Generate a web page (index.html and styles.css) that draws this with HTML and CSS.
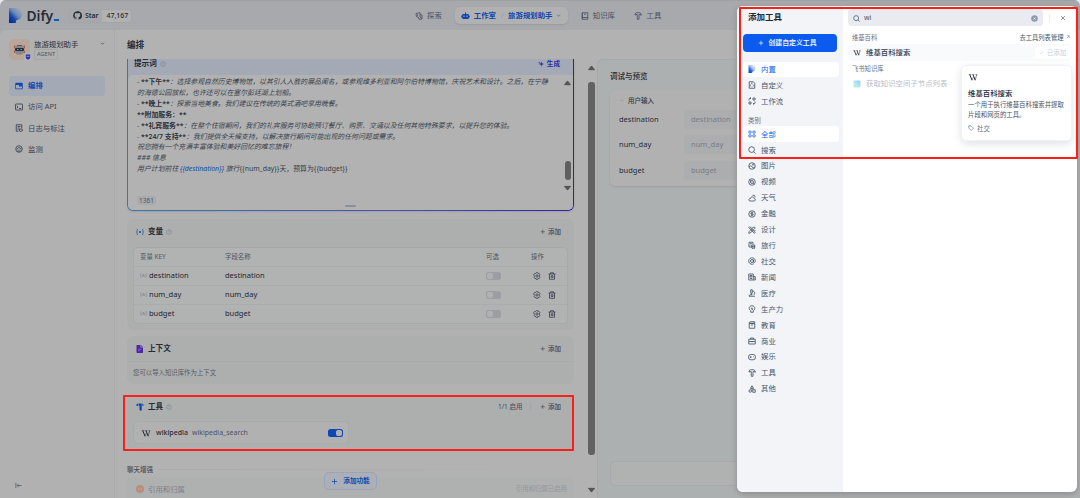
FILE: index.html
```html
<!DOCTYPE html>
<html lang="zh-CN">
<head>
<meta charset="utf-8">
<title>Dify</title>
<link rel="stylesheet" href="styles.css">
</head>
<body>
<svg class="sprite" xmlns="http://www.w3.org/2000/svg">
  <defs>
    <linearGradient id="lg-dark" x1=".1" x2=".9" y1="1" y2=".1"><stop offset="0" stop-color="#06289a"/><stop offset=".35" stop-color="#1a49a8"/><stop offset=".6" stop-color="#6d89b8"/><stop offset="1" stop-color="#a2a9b4"/></linearGradient>
    <linearGradient id="lg-light" x1=".1" x2=".9" y1="1" y2=".1"><stop offset="0" stop-color="#0f3fd0"/><stop offset=".35" stop-color="#2e66e0"/><stop offset=".6" stop-color="#9dbdf5"/><stop offset="1" stop-color="#eef4ff"/></linearGradient>
    <linearGradient id="lg-feishu" x1="1" x2="0" y1="0" y2="1"><stop offset="0" stop-color="#a9b9f8"/><stop offset=".5" stop-color="#a5e9f5"/><stop offset="1" stop-color="#c9f5c4"/></linearGradient>
  </defs>
  <symbol id="help" viewBox="0 0 16 16"><circle cx="8" cy="8" r="6.5"/><path d="M6 6.3c0-2.6 4-2.6 4 0 0 1.4-2 1.5-2 3M8 11v1"/></symbol>
  <symbol id="chev" viewBox="0 0 16 16"><path d="M3 5.5l5 5 5-5"/></symbol>
  <symbol id="plus" viewBox="0 0 16 16"><path d="M8 2v12M2 8h12"/></symbol>
  <symbol id="gear" viewBox="0 0 16 16"><path d="M6.5 1.3h3l.7 1.7 1.8-.4 1.7 2.3-.9 1.5.9 1.6-.9 1.6.8 1.5-1.7 2.3-1.7-.5-.7 1.8h-3l-.7-1.8-1.7.5-1.7-2.3.8-1.5L1.5 8l1-1.6-.9-1.5L3.400 2.600l1.700.4z"/><circle cx="8" cy="8" r="2.3"/></symbol>
  <symbol id="trash" viewBox="0 0 16 16"><path d="M1 4h14M5 4V1.500h6V4M3 4v10.500h10V4M6.500 7.500h3.500v3.500H6.500z"/></symbol>
  <symbol id="file" viewBox="0 0 16 16"><path d="M2.500 1.500h8l3 3v10h-11zM5.500 7L4.500 9l1.500 2M10 7l1.500 2L10 11M6 4.500h3"/></symbol>
  <symbol id="flow" viewBox="0 0 16 16"><path d="M2 7V4.500C2 3 3 2.500 4 2.500h2M10 2h4v4h-4zM2 10h4v4H2zM14 9v2.500c0 1.500-1 2-2 2h-2M5 1v3M11 12v3"/></symbol>
  <symbol id="grid" viewBox="0 0 16 16"><rect x="1.500" y="2" width="5" height="4.500" rx="2"/><rect x="9.500" y="2" width="5" height="4.500" rx="2"/><rect x="1.500" y="9.500" width="5" height="4.500" rx="2"/><rect x="9.500" y="9.500" width="5" height="4.500" rx="2"/></symbol>
  <symbol id="search" viewBox="0 0 16 16"><circle cx="7.200" cy="7.200" r="5.700"/><path d="M11.500 11.500l3.500 3.500"/></symbol>
  <symbol id="image" viewBox="0 0 16 16"><circle cx="8" cy="8" r="6.500"/><path d="M2 9.500c3-3 5-2 6 0s3 3 5.500 1"/><circle cx="10" cy="5.500" r="1"/></symbol>
  <symbol id="video" viewBox="0 0 16 16"><circle cx="8" cy="8" r="6.500"/><circle cx="8" cy="8" r="3"/><path d="M7.500 8h1M3.500 3.500l2 2M10.500 10.500l2 2"/></symbol>
  <symbol id="weather" viewBox="0 0 16 16"><path d="M4 14h8c3.500 0 3.500-5 .2-5C11 4.500 5 5 5 9c-4-.5-4 5-1 5M9 4c1-2.500 5-2 5 1v2"/></symbol>
  <symbol id="finance" viewBox="0 0 16 16"><circle cx="8" cy="8" r="6.500"/><path d="M10.500 5.500h-4c-1.500 0-1.500 2.500 0 2.500h3c1.500 0 1.500 2.500 0 2.500h-4M8 3.500v9"/></symbol>
  <symbol id="design" viewBox="0 0 16 16"><path d="M3 1.500L1.500 3l11 11.500L14.500 13zM12 1.500l2.500 2.500L4.500 14l-3 .5.500-3zM7 1.500l1.500 2M13 8l1.500 2"/></symbol>
  <symbol id="travel" viewBox="0 0 16 16"><path d="M2 12V2.500h8V7M2 12h5M4.500 5h3M4.500 8h2M7.500 8h6v6h-6zM9 14v1.500M12.500 14v1.500M7.500 11h6"/></symbol>
  <symbol id="social" viewBox="0 0 16 16"><circle cx="8" cy="8" r="3"/><path d="M11 5v4.500c0 2.500 3.500 2 3.500-1.500a6.500 6.500 0 1 0-3 5.500"/></symbol>
  <symbol id="news" viewBox="0 0 16 16"><path d="M1.500 2h9v12h-9zM10.500 7h4v7h-4M4 5h4v3H4zM4 11h4M12.500 9.500v2"/></symbol>
  <symbol id="medical" viewBox="0 0 16 16"><path d="M2 14.500h12M4 11.500h5M5.500 1.500h3v7h-3zM9 4c5 0 5.500 6 2.500 8M2.500 11.500v3M7 9v2.500"/></symbol>
  <symbol id="bulb" viewBox="0 0 16 16"><path d="M5.500 11.500C0 8 2.500 1.500 8 1.500S16 8 10.500 11.500v3h-5zM8 5L6.500 7.500h3L8 10"/></symbol>
  <symbol id="book" viewBox="0 0 16 16"><path d="M2.500 5V3.500c0-1.500 1-2 2-2h9v3h-10M2.500 5h11v9.500h-11zM5.500 8h5"/></symbol>
  <symbol id="case" viewBox="0 0 16 16"><path d="M1.500 4.500h13v9.500h-13zM5 4.500V2h6v2.500M1.500 9h13M8 8v2.500"/></symbol>
  <symbol id="game" viewBox="0 0 16 16"><rect x="1" y="3" width="14" height="10.500" rx="4.500"/><path d="M3.500 8.200h3.500M5.300 6.500v3.500M10 7h1M11.500 9.500h1"/></symbol>
  <symbol id="hammer" viewBox="0 0 16 16"><path d="M2 6V3.500L5 1.500h6.500L14.500 4v2.500l-3-1.500H10v9.500H6.500V5z"/></symbol>
  <symbol id="other" viewBox="0 0 16 16"><path d="M8 1.500L11 6.500H5z"/><circle cx="4.500" cy="12" r="2.500"/><path d="M9.500 9.500h5v5h-5zM5 8h6"/></symbol>
  <symbol id="tag" viewBox="0 0 16 16"><path d="M2 2h6l6.500 6.500-6 6L2 8zM5 5h.5"/></symbol>
  <symbol id="var" viewBox="0 0 16 16"><path d="M2 3v10M14 3v10M5.500 11L8 5l2.500 6M6.500 9h3"/></symbol>
  <symbol id="up" viewBox="0 0 8 6"><path d="M3.300.6Q4 0 4.700.6L7.800 4.600Q8 5.600 7.200 5.600H.8Q0 5.600.2 4.600z"/></symbol>
  <symbol id="wiki" viewBox="0 0 22 16"><path d="M1 1.500h6M9 1.500h5M16.500 1.500H21" stroke-width="1.200"/><path d="M3.500 1.500L8.800 14M11 1.500L16 14" stroke-width="2.200"/><path d="M8.500 14.500L12 7M15.700 14.500L19.500 1.500" stroke-width="1.200"/></symbol>
</svg>

<div class="app">
  <header class="topbar">
    <div class="brand">
      <svg class="logo" viewBox="0 0 13 15"><path d="M0 0h7a6 6 0 0 1 6 6c0 3.500-1.500 5.500-5 6-1 .2-1.200 1-1.200 3H0z" fill="url(#lg-dark)"/></svg>
      <span class="word">Dify<i></i></span>
    </div>
    <div class="star"><span class="gh"><svg viewBox="0 0 16 16"><path fill="currentColor" d="M8 .5a7.500 7.500 0 0 0-2.500 14.600c.4.100.5-.1.5-.4v-1.500c-2 .4-2.600-.8-2.800-1.300-.3-.6-.6-.9-1-1.200.8-.2 1.500.3 1.900 1 .6.9 1.400.8 2 .5 0-.5.200-.9.500-1.100-2-.3-3.600-1-3.600-3.700 0-.8.300-1.500.8-2-.1-.4-.3-1.100.1-2 0 0 .7-.2 2.100.8a7 7 0 0 1 4 0c1.400-1 2.100-.8 2.100-.8.4.9.200 1.600.1 2 .5.500.8 1.200.8 2 0 2.700-1.700 3.400-3.600 3.700.3.300.6.800.6 1.500v2.200c0 .2.100.5.500.4A7.500 7.500 0 0 0 8 .5z"/></svg>Star</span><span class="count">47,167</span></div>
    <nav class="topnav">
      <span class="tab"><svg class="ic" viewBox="0 0 16 16"><path d="M2 3l8-1.500v3L14 6v8l-6 .5-1-4-4-1zM10 4.500V10l4 3M5 5v3"/></svg>探索</span>
      <span class="tab on"><svg class="bot" viewBox="0 0 18 16"><path fill="currentColor" fill-rule="evenodd" d="M8 1h2v3h4c1 0 1.500.8 1.500 2v1h2v4h-2v1c0 1.500-.8 2-2 2h-9c-1.200 0-2-.8-2-2v-1h-2V7h2V6c0-1.200.5-2 2-2H8zM5 7v3h2V7zm6 0v3h2V7z"/></svg>工作室<em>/</em>旅游规划助手<svg class="ic sm" viewBox="0 0 16 16"><use href="#chev"/></svg></span>
      <span class="tab know"><svg class="ic" viewBox="0 0 16 16"><path d="M2.500 1.500h11v13h-11zM2.500 11h11M6 4.500h4M2.500 1.500v13"/></svg>知识库</span>
      <span class="tab tools"><svg class="ic" viewBox="0 0 16 16"><use href="#hammer"/></svg>工具</span>
    </nav>
  </header>

  <div class="body">
    <aside class="side">
      <div class="appinfo">
        <div class="avatar">
          <svg viewBox="0 0 21 21"><path d="M5.800 6.500v3M15.200 6.500v3M5.800 11.500v2.500M15.200 11.500v2.500" stroke="#a04a48" stroke-width="1.200"/><rect x="6.800" y="6" width="7.500" height="9.500" rx="2.500" fill="#84878d"/><rect x="6" y="9" width="9" height="3" rx="1" fill="#26313f"/><path d="M8 10.500h1.500M11.500 10.500H13" stroke="#4fa6b5"/><path d="M8 6.500h5" stroke="#7b4a4d"/></svg>
          <span class="badge"><svg viewBox="0 0 8 8"><path d="M1.800 1.500h4.400v3q0 1.500-2.200 2.200Q1.800 6 1.800 4.500z" fill="#2a34a8"/><path d="M2.500 3.300h3" stroke="#8d93c8"/></svg></span>
        </div>
        <div class="appname"><b>旅游规划助手</b><small>AGENT</small></div>
        <svg class="ic sm" viewBox="0 0 16 16"><use href="#chev"/></svg>
      </div>
      <nav class="sidenav">
        <span class="on"><svg viewBox="0 0 16 16"><path fill="currentColor" fill-rule="evenodd" d="M2 1.500h12c1 0 1.500.5 1.500 1.500v10c0 1-.5 1.500-1.500 1.500H2C1 14.500.5 14 .5 13V3c0-1 .5-1.500 1.500-1.500zM2 6v7h12V9H8V6z"/></svg>编排</span>
        <span><svg class="ic" viewBox="0 0 16 16"><rect x="1" y="2" width="14" height="12" rx="1"/><path d="M3.500 5.500L6 8l-2.500 2.500M8 11h4.500"/></svg>访问 API</span>
        <span><svg class="ic" viewBox="0 0 16 16"><path d="M13.500 8V1.500h-11v13H7M5 5h6M5 8h4M5 11h2M9 10h5.500v4H13l-1.500 1.500L10 14H9z"/></svg>日志与标注</span>
        <span><svg class="ic" viewBox="0 0 16 16"><circle cx="8" cy="8" r="6.500"/><path d="M4 9c0-5 8-5 8 0M8 9l2-2M5 12h6"/></svg>监测</span>
      </nav>
      <svg class="ic collapse" viewBox="0 0 16 16"><path d="M2 2v12M15 8H5M8.500 4L5 8l3.500 4"/></svg>
    </aside>

    <main class="config">
      <h1>编排</h1>
      <div class="scroller">
        <div class="cards">
          <section class="prompt">
            <div class="prompt-in">
              <div class="prompt-head"><b>提示词</b><svg class="ic help" viewBox="0 0 16 16"><use href="#help"/></svg><span class="gen"><svg viewBox="0 0 16 16"><path fill="currentColor" d="M9 1l1.700 5.300L16 8l-5.300 1.700L9 15 7.300 9.700 2 8l5.300-1.700zM3 1l.7 2.300L6 4l-2.300.7L3 7l-.7-2.300L0 4l2.300-.7z"/></svg>生成</span></div>
              <div class="prompt-body">
                <div class="text">
                  <p>- <b>**下午**</b>：选择参观自然历史博物馆，以其引人入胜的展品闻名，或参观维多利亚和阿尔伯特博物馆，庆祝艺术和设计。之后，在宁静</p>
                  <p>的海德公园放松，也许还可以在塞尔彭廷湖上划船。</p>
                  <p>- <b>**晚上**</b>：探索当地美食。我们建议在传统的英式酒吧享用晚餐。</p>
                  <p><b>**附加服务：**</b></p>
                  <p>- <b>**礼宾服务**</b>：在整个住宿期间，我们的礼宾服务可协助预订餐厅、购票、交通以及任何其他特殊要求，以提升您的体验。</p>
                  <p>- <b>**24/7 支持**</b>：我们提供全天候支持，以解决旅行期间可能出现的任何问题或需求。</p>
                  <p>祝您拥有一个充满丰富体验和美好回忆的难忘旅程！</p>
                  <p>### 信息</p>
                  <p class="last">用户计划前往 <a>{{destination}}</a> 旅行<span>{{num_day}}天，预算为{{budget}}</span></p>
                </div>
                <div class="bar"><svg viewBox="0 0 8 6"><use href="#up"/></svg><i></i><svg class="down" viewBox="0 0 8 6"><use href="#up"/></svg></div>
              </div>
              <div class="prompt-foot"><span>1361</span><i></i></div>
            </div>
          </section>

          <section class="card vars">
            <div class="card-head"><svg class="ic blue" viewBox="0 0 16 16"><path d="M4 2C1 3 3 7 1 8c2 1 0 5 3 6M12 2c3 1 1 5 3 6-2 1 0 5-3 6M6 6l4 4M10 6l-4 4"/></svg><b>变量</b><svg class="ic help" viewBox="0 0 16 16"><use href="#help"/></svg><span class="add"><svg class="ic" viewBox="0 0 16 16"><use href="#plus"/></svg>添加</span></div>
            <div class="table">
              <div class="tr th"><span>变量 KEY</span><span>字段名称</span><span>可选</span><span>操作</span></div>
              <div class="tr"><span><svg class="ic v" viewBox="0 0 16 16"><use href="#var"/></svg>destination</span><span>destination</span><span><i class="sw"></i></span><span class="ops"><svg class="ic" viewBox="0 0 16 16"><use href="#gear"/></svg><svg class="ic" viewBox="0 0 16 16"><use href="#trash"/></svg></span></div>
              <div class="tr"><span><svg class="ic v" viewBox="0 0 16 16"><use href="#var"/></svg>num_day</span><span>num_day</span><span><i class="sw"></i></span><span class="ops"><svg class="ic" viewBox="0 0 16 16"><use href="#gear"/></svg><svg class="ic" viewBox="0 0 16 16"><use href="#trash"/></svg></span></div>
              <div class="tr"><span><svg class="ic v" viewBox="0 0 16 16"><use href="#var"/></svg>budget</span><span>budget</span><span><i class="sw"></i></span><span class="ops"><svg class="ic" viewBox="0 0 16 16"><use href="#gear"/></svg><svg class="ic" viewBox="0 0 16 16"><use href="#trash"/></svg></span></div>
            </div>
          </section>

          <section class="card context">
            <div class="card-head"><svg viewBox="0 0 16 16"><path fill="#4a26a8" d="M3 0h6v5h5v9c0 1.200-.8 2-2 2H3c-1.200 0-2-.8-2-2V2C1 .8 1.800 0 3 0zM10.500 0L14 3.500h-3.500z"/><path d="M4 8.500h7M4 11.500h4" stroke="#a79cc4"/></svg><b>上下文</b><span class="add"><svg class="ic" viewBox="0 0 16 16"><use href="#plus"/></svg>添加</span></div>
            <p>您可以导入知识库作为上下文</p>
          </section>

          <section class="card toolcard">
            <div class="card-head"><svg viewBox="0 0 16 16"><path fill="#0d48b4" d="M1 2.500L4 1v4.500L1 6zM5 1h6.500v14H7V5.500H5zM12.500 1.500l2.500 1v3l-2.500-.5z"/></svg><b>工具</b><svg class="ic help" viewBox="0 0 16 16"><use href="#help"/></svg><span class="enabled">1/1 启用</span><span class="add"><svg class="ic" viewBox="0 0 16 16"><use href="#plus"/></svg>添加</span></div>
            <div class="toolrow"><svg class="ic w" viewBox="0 0 22 16"><use href="#wiki"/></svg><b>wikipedia</b><span class="fn">wikipedia_search</span><i class="sw on"></i></div>
          </section>

          <div class="chat">聊天增强<i></i></div>
          <section class="cite"><svg viewBox="0 0 16 16"><circle cx="8" cy="8" r="8" fill="#b98d79"/><path d="M4 6h3v4H4zM9 6h3v4H9z" fill="#b3a39b"/></svg><span>引用和归属</span><em>引用和归属已启用</em></section>
        </div>
        <div class="bar main"><svg viewBox="0 0 8 6"><use href="#up"/></svg><i></i><svg class="down" viewBox="0 0 8 6"><use href="#up"/></svg></div>
      </div>
      <div class="feature"><svg class="ic" viewBox="0 0 16 16"><use href="#plus"/></svg>添加功能</div>
    </main>

    <section class="preview">
      <h2>调试与预览</h2>
      <div class="inputs">
        <div class="in-head"><svg class="ic sm" viewBox="0 0 16 16"><use href="#chev"/></svg>用户输入</div>
        <div class="field"><span>destination</span><i>destination</i></div>
        <div class="field"><span>num_day</span><i>num_day</i></div>
        <div class="field"><span>budget</span><i>budget</i></div>
      </div>
      <div class="chatbox"></div>
    </section>
  </div>

  <div class="modal">
    <aside class="mside">
      <h3>添加工具</h3>
      <button><svg class="ic" viewBox="0 0 16 16"><use href="#plus"/></svg>创建自定义工具</button>
      <nav>
        <span class="on"><svg viewBox="0 0 13 15"><path d="M0 0h7a6 6 0 0 1 6 6c0 3.500-1.500 5.500-5 6-1 .2-1.200 1-1.200 3H0z" fill="url(#lg-light)"/></svg>内置</span>
        <span><svg class="ic" viewBox="0 0 16 16"><use href="#file"/></svg>自定义</span>
        <span><svg class="ic" viewBox="0 0 16 16"><use href="#flow"/></svg>工作流</span>
      </nav>
      <h4>类别</h4>
      <nav>
        <span class="on"><svg class="ic" viewBox="0 0 16 16"><use href="#grid"/></svg>全部</span>
        <span><svg class="ic" viewBox="0 0 16 16"><use href="#search"/></svg>搜索</span>
        <span><svg class="ic" viewBox="0 0 16 16"><use href="#image"/></svg>图片</span>
        <span><svg class="ic" viewBox="0 0 16 16"><use href="#video"/></svg>视频</span>
        <span><svg class="ic" viewBox="0 0 16 16"><use href="#weather"/></svg>天气</span>
        <span><svg class="ic" viewBox="0 0 16 16"><use href="#finance"/></svg>金融</span>
        <span><svg class="ic" viewBox="0 0 16 16"><use href="#design"/></svg>设计</span>
        <span><svg class="ic" viewBox="0 0 16 16"><use href="#travel"/></svg>旅行</span>
        <span><svg class="ic" viewBox="0 0 16 16"><use href="#social"/></svg>社交</span>
        <span><svg class="ic" viewBox="0 0 16 16"><use href="#news"/></svg>新闻</span>
        <span><svg class="ic" viewBox="0 0 16 16"><use href="#medical"/></svg>医疗</span>
        <span><svg class="ic" viewBox="0 0 16 16"><use href="#bulb"/></svg>生产力</span>
        <span><svg class="ic" viewBox="0 0 16 16"><use href="#book"/></svg>教育</span>
        <span><svg class="ic" viewBox="0 0 16 16"><use href="#case"/></svg>商业</span>
        <span><svg class="ic" viewBox="0 0 16 16"><use href="#game"/></svg>娱乐</span>
        <span><svg class="ic" viewBox="0 0 16 16"><use href="#hammer"/></svg>工具</span>
        <span><svg class="ic" viewBox="0 0 16 16"><use href="#other"/></svg>其他</span>
      </nav>
    </aside>
    <div class="mmain">
      <div class="searchrow">
        <div class="searchbox"><svg class="ic" viewBox="0 0 16 16"><use href="#search"/></svg>wi<svg class="clear" viewBox="0 0 16 16"><circle cx="8" cy="8" r="7.500" fill="#8d99ae"/><path d="M5.500 5.500l5 5M10.500 5.500l-5 5" stroke="#fff" stroke-width="1.500"/></svg></div>
        <i></i><svg class="ic close" viewBox="0 0 16 16"><path d="M3 3l10 10M13 3L3 13"/></svg>
      </div>
      <div class="group"><span>维基百科</span><span class="manage">去工具列表管理<svg class="ic" viewBox="0 0 16 16"><path d="M3 13L13 3M5 3h8v8"/></svg></span></div>
      <div class="result"><svg class="ic w" viewBox="0 0 22 16"><use href="#wiki"/></svg><b>维基百科搜索</b><span class="added"><svg class="ic" viewBox="0 0 16 16"><path d="M2 8.500l4 4 8-9"/></svg>已添加</span></div>
      <div class="group two"><span>飞书知识库</span></div>
      <div class="result off"><svg viewBox="0 0 16 16"><path d="M1 1h12l2 2v10l-3 2H1z" fill="url(#lg-feishu)"/></svg>获取知识空间子节点列表</div>
      <div class="tip">
        <svg class="ic w" viewBox="0 0 22 16"><use href="#wiki"/></svg>
        <b>维基百科搜索</b>
        <p>一个用于执行维基百科搜索并提取<br>片段和网页的工具。</p>
        <small><svg class="ic" viewBox="0 0 16 16"><use href="#tag"/></svg>社交</small>
      </div>
    </div>
  </div>

  <div class="mark mark-modal"></div>
  <div class="mark mark-tools"></div>
</div>
</body>
</html>
```
FILE: styles.css
```css
* { box-sizing: border-box; }
body { margin: 0; background: #e8e8e8; }
body, button { font-family: "Noto Sans", "Noto Sans CJK SC", sans-serif; font-size: 7.4px; line-height: 1.2; color: #262c36; }
h1, h2, h3, h4, p { margin: 0; font-weight: 400; }
b { font-weight: 600; }
i, em { font-style: normal; }
svg { display: block; flex: none; width: 8px; height: 8px; }
.sprite { position: absolute; width: 0; height: 0; }
.ic { fill: none; stroke: currentColor; stroke-width: 1.7; }
.sm { width: 5px; height: 5px; }
.app { position: relative; width: 1080px; height: 498px; overflow: hidden; border-radius: 6px 6px 0 0; background: #a8a9ac; display: flex; flex-direction: column; white-space: nowrap; }

/* top bar */
.topbar { height: 30px; flex: none; display: flex; align-items: center; padding-left: 9px; border-top: 1px solid #a0a1a3; }
.brand { display: flex; align-items: center; width: 59px; }
.logo { width: 13px; height: 15px; }
.word { margin-left: 4.5px; font-size: 13.8px; font-weight: 600; line-height: 16px; color: #252d3b; }
.word i { display: inline-block; width: 5px; height: 2px; background: #0e5cc5; margin-left: 1px; }
.star { display: flex; height: 14px; border-radius: 4px; overflow: hidden; border: 1px solid #a4a5a8; width: 64px; font-size: 6.900px; font-weight: 600; line-height: 12px; }
.gh { display: flex; align-items: center; gap: 3px; width: 33px; padding-left: 4px; background: #a6a8ab; }
.gh svg { width: 9px; height: 9px; }
.count { flex: 1; background: #b2b2b2; padding-left: 4.500px; font-weight: 500; }
.topnav { display: flex; align-items: center; height: 100%; margin-left: 283px; color: #4a515e; font-size: 7.4px; }
.tab { display: flex; align-items: center; gap: 4px; }
.tab.on { width: 113px; height: 17px; margin-left: 13px; padding-left: 6px; border-radius: 5px; background: #b1b1b2; color: #0e47ae; font-weight: 600; box-shadow: 0 1px 2px #9a9b9e; }
.tab.on em { color: #8d9bb5; font-weight: 400; margin: 0 .7px; }
.bot { width: 9px; height: 8px; }
.know { margin-left: 13px; }
.know + .tools { margin-left: 19.500px; }

/* page body */
.body { flex: 1; display: flex; min-height: 0; background: #b2b2b2; border-radius: 6px 0 0 0; overflow: hidden; }
.side { width: 115px; border-right: 1px solid #a8a9ab; padding: 9px 9px 9px; display: flex; flex-direction: column; background: #b1b1b2; }
.appinfo { display: flex; height: 21px; align-items: flex-start; }
.avatar { position: relative; width: 21px; height: 21px; border-radius: 5px; background: #b8a698; }
.avatar > svg { width: 21px; height: 21px; }
.badge { position: absolute; left: 15px; top: 14px; width: 8px; height: 8px; border-radius: 2px; background: #b4b4b4; }
.badge svg { width: 8px; height: 8px; }
.appname { width: 58px; margin-left: 4px; display: flex; flex-direction: column; align-items: flex-start; }
.appname b { font-size: 7.4px; line-height: 10px; font-weight: 400; }
.appname small { font-size: 5.600px; line-height: 9px; border: 1px solid #a5a6a8; border-radius: 2px; padding: 0 2px; color: #4d5460; }
.appinfo .sm { margin: 2px 0 0 8px; }
.sidenav { margin-top: 16px; display: flex; flex-direction: column; gap: 1.5px; color: #3a414d; font-size: 7.4px; }
.sidenav span { height: 19.6px; display: flex; align-items: center; gap: 5px; padding-left: 6px; border-radius: 4px; }
.sidenav .on { background: #a3a9b5; color: #1148ae; font-weight: 600; }
.collapse { width: 7px; height: 7px; margin: auto 0 0 6px; color: #505763; }

/* configuration column */
.config { position: relative; width: 482px; display: flex; flex-direction: column; padding-left: 12px; }
.config h1 { font-size: 8.6px; font-weight: 700; line-height: 30px; height: 29px; }
.scroller { flex: 1; min-height: 0; display: flex; overflow: hidden; }
.cards { width: 447px; }
.bar { display: flex; flex-direction: column; align-items: center; width: 7px; fill: #565656; }
.bar svg { width: 7px; height: 6px; }
.bar i { width: 6px; flex: none; background: #5f5f5f; border-radius: 3px; }
.bar .down { transform: rotate(180deg); }
.bar.main { margin-left: 13.900px; height: 433px; padding-top: 6px; }
.bar.main i { width: 6.600px; height: 373px; margin: 11px 0 32px; background: #626262; }
.prompt { height: 152px; padding: 0 1px 1.5px; border-radius: 0 0 6px 6px; background: linear-gradient(90deg, #3679a8, #4a52b8 60%, #2d23a0); box-shadow: 0 1px 2px #a0a0a3; }
.prompt-in { height: 100%; border-radius: 0 0 5px 5px; background: #a3a9b5; overflow: hidden; display: flex; flex-direction: column; }
.prompt-head { height: 16px; display: flex; align-items: center; padding: 0 13px 6px 6px; font-size: 7.6px; flex: none; }
.help { width: 6px; height: 6px; margin-left: 3px; color: #858b96; }
.gen { margin-left: auto; display: flex; gap: 3px; align-items: center; color: #3030a8; font-size: 6.6px; font-weight: 600; }
.gen svg { width: 6px; height: 6px; }
.prompt-body { height: 120px; display: flex; background: #b2b2b2; border-radius: 5px 0 0 0; }
.text { width: 436px; flex: none; padding: 2.400px 0 0 9px; font-size: 6.88px; font-style: italic; color: #363e4a; }
.text p { height: 10.85px; line-height: 10.85px; }
.text b { font-style: normal; font-weight: 600; color: #2c333e; }
.text a { color: #0e49b0; }
.text span { font-style: normal; }
.prompt-body .bar { padding-top: 5px; }
.prompt-body .bar i { height: 19px; margin: 75px 0 5px; }
.prompt-foot { flex: 1; background: #b2b2b2; position: relative; padding-left: 9px; }
.prompt-foot span { display: inline-block; background: #a8aaad; border-radius: 3px; padding: 0 2px; line-height: 9px; font-size: 6.5px; color: #515865; margin-top: 1px; }
.prompt-foot i { position: absolute; left: 217px; bottom: 3px; width: 11px; height: 1.5px; background: #8b8f96; border-radius: 1px; }

.card { background: #adafaf; border-radius: 6px; padding: 0 6px; }
.card-head { display: flex; align-items: center; padding: 0 7px 0 3px; font-size: 7.6px; height: 26px; }
.card-head b { margin-left: 4px; font-weight: 700; }
.blue { color: #1f58ae; }
.add { margin-left: auto; display: flex; align-items: center; gap: 3px; font-size: 6.5px; color: #3d4450; font-weight: 500; }
.add svg { width: 5.500px; height: 5.500px; }
.vars { margin-top: 8px; height: 111px; }
.vars .card-head { height: 28px; padding-bottom: 2px; }
.table { border: 1px solid #a6a8aa; border-radius: 4px; background: #b1b2b2; height: 77px; }
.tr { height: 19.1px; display: grid; grid-template-columns: 85px 261px 46px 1fr; align-items: center; padding-left: 6px; font-size: 7.5px; color: #1f2530; border-top: 1px solid #a9abac; }
.tr span { display: flex; align-items: center; }
.th { height: 17.600px; border: 0; font-size: 6.4px; color: #4d5462; }
.th span:last-child { padding-left: 0; margin-left: -1px; }
.tr .v { width: 7px; height: 7px; margin-right: 2px; color: #767c88; stroke-width: 1.300; }
.sw { width: 15px; height: 8px; border-radius: 2.500px; background: #9d9ea4; padding: 1px; display: flex; }
.sw::before { content: ""; width: 6px; height: 6px; border-radius: 2px; background: #b1b1b2; }
.tr .ops { gap: 6.500px; padding-left: 1px; color: #3d4451; }
.context { margin-top: 6px; height: 48px; }
.context p { font-size: 6.4px; color: #555c68; line-height: 21px; }
.context .card-head { border-bottom: 1px solid #a9abab; margin: 0 -6px; padding: 0 13px 0 9px; }
.toolcard { margin-top: 11px; height: 55px; }
.toolcard .card-head { height: 26px; padding-bottom: 3px; }
.enabled { margin-left: auto; font-size: 6.5px; color: #434a56; padding-right: 7px; border-right: 1px solid #a3a5a8; }
.enabled + .add { margin-left: 9px; }
.toolrow { width: 216px; height: 23px; border: 1px solid #a8aaab; border-radius: 4px; background: #b1b1b2; display: flex; align-items: center; padding: 1px 5px 0 7px; font-size: 7px; }
.w { width: 10px; height: 7px; color: #1c222c; }
.toolrow b { margin-left: 5px; font-weight: 500; }
.fn { margin-left: 4px; color: #4e5562; }
.toolrow .sw { margin-left: auto; background: #0e48b0; justify-content: flex-end; }
.chat { margin-top: 14px; height: 11px; font-size: 6.5px; font-weight: 500; color: #444b57; display: flex; align-items: center; gap: 5px; }
.chat i { flex: 1; height: 1px; background: linear-gradient(90deg, #a9abad, #b2b2b2); }
.cite { margin-top: 2px; height: 30px; border-radius: 6px 6px 0 0; background: #afb0b0; display: flex; align-items: flex-start; padding: 8px 7px 0 9px; color: #7e838b; font-size: 7.4px; }
.cite span { margin-left: 4px; }
.cite em { margin-left: auto; font-size: 6.4px; color: #93979d; }
.feature { position: absolute; left: 209px; top: 442px; width: 53px; height: 18px; border: 1px solid #98a4bb; border-radius: 5px; background: #aaafb8; color: #1148ad; font-size: 6.6px; font-weight: 600; display: flex; align-items: center; justify-content: center; gap: 5px; }
.feature svg { width: 7px; height: 7px; }

/* preview */
.preview { flex: 1; margin-top: 29px; border: 1px solid #a6a8a9; border-width: 1px 0 0 1px; border-radius: 6px 0 0 0; background: #adb0b0; padding: 11px 0 0 12px; display: flex; flex-direction: column; }
.preview h2 { font-size: 7.500px; font-weight: 500; line-height: 11px; height: 12px; }
.inputs { width: 460px; height: 96px; margin-top: 7px; border-radius: 5px; background: #b1b1b1; box-shadow: 0 1px 2px #9c9ea0; padding: 5px 0 0 9px; }
.in-head { display: flex; align-items: center; gap: 4px; font-size: 6.5px; font-weight: 500; height: 11px; color: #343b47; padding-left: 1px; }
.in-head svg { width: 4px; color: #8b9098; }
.field { height: 25.5px; display: flex; align-items: center; font-size: 7.5px; padding-top: .6px; }
.field span { width: 65px; }
.field i { width: 200px; height: 19px; border-radius: 4px; background: #abadae; padding-left: 7px; line-height: 19px; color: #787e88; }
.chatbox { height: 25px; margin: auto 9px 12px 0; border: 1px solid #a7a9aa; border-radius: 5px; background: #b0b1b1; }

/* add-tool dialog */
.modal { position: absolute; left: 737px; top: 6px; width: 339.500px; height: 485.500px; border-radius: 6px; background: #fff; display: flex; overflow: hidden; box-shadow: 0 2px 6px #8a8b8d; }
.mside { width: 106px; background: #f2f4f7; padding: 0 5px 0 6px; }
.mside h3 { height: 28px; line-height: 22px; padding-left: 5px; font-size: 8.5px; font-weight: 600; color: #1d2939; }
.mside button { width: 94px; height: 18px; padding: 0 5px 0 0; border: 0; border-radius: 4px; background: #0c5bef; color: #fff; font-size: 6.9px; font-weight: 500; display: flex; align-items: center; justify-content: center; gap: 4px; margin-bottom: 9.500px; }
.mside button svg { width: 6px; height: 6px; }
.mside nav span { height: 15.930px; display: flex; align-items: center; gap: 5px; padding-left: 5px; border-radius: 4px; color: #475467; font-size: 7.4px; }
.mside nav .on { background: #fff; color: #155eef; margin-right: -1px; }
.mside h4 { height: 16px; line-height: 23px; padding-left: 5px; font-size: 6.4px; color: #667085; margin-bottom: .8px; }
.mmain { flex: 1; position: relative; padding: 3px 5px 0 5px; }
.searchrow { display: flex; align-items: center; height: 17px; }
.searchbox { width: 194.500px; height: 17px; border-radius: 4px; background: #e9ebf0; display: flex; align-items: center; gap: 4px; padding: 1px 5px 0; color: #475467; font-size: 7px; }
.searchbox svg { width: 7px; height: 7px; }
.searchbox .clear { margin-left: auto; }
.searchrow i { width: 1px; height: 8px; background: #eaecf0; margin: 0 10px 0 6.500px; }
.close { width: 6px; height: 6px; color: #475467; }
.group { display: flex; justify-content: space-between; height: 18px; align-items: center; padding: 5px 1.500px 0 4px; font-size: 6.3px; color: #667085; }
.manage { display: flex; align-items: center; gap: 2.500px; color: #475467; }
.manage svg { width: 4px; height: 4px; }
.result { height: 17px; border-radius: 4px; background: #f9fafb; display: flex; align-items: center; padding: 0 1px 0 5px; font-size: 7.4px; color: #344054; }
.result .w { width: 8px; height: 6px; }
.result b { margin-left: 5px; font-weight: 500; }
.added { margin-left: auto; width: 36px; height: 13px; background: #fff; border-radius: 3px; display: flex; align-items: center; justify-content: center; gap: 3px; font-size: 6.4px; color: #c8cdd5; }
.added svg { width: 5px; height: 5px; }
.two { height: 14px; padding-top: 1px; }
.off { background: none; color: #b9bec7; gap: 5px; }
.tip { position: absolute; left: 118px; top: 59px; width: 111px; height: 76px; border-radius: 5px; background: #fff; border: 1px solid #f0f2f5; box-shadow: 0 3px 8px #dfe2e8; padding: 8px 0 0 6px; display: flex; flex-direction: column; color: #1d2939; }
.tip b { font-size: 7.4px; font-weight: 500; line-height: 11px; margin-top: 6.500px; }
.tip p { font-size: 6.4px; line-height: 10px; margin-top: 1.500px; color: #475467; }
.tip small { display: flex; align-items: center; gap: 3px; margin-top: 4.500px; font-size: 6.4px; color: #667085; }
.tip small svg { width: 6px; height: 6px; }

/* annotation frames */
.mark { position: absolute; border: 2px solid #fb2015; border-radius: 1px; }
.mark-modal { left: 739px; top: 7px; width: 339px; height: 152px; }
.mark-tools { left: 123px; top: 395px; width: 451px; height: 55.500px; }
```
